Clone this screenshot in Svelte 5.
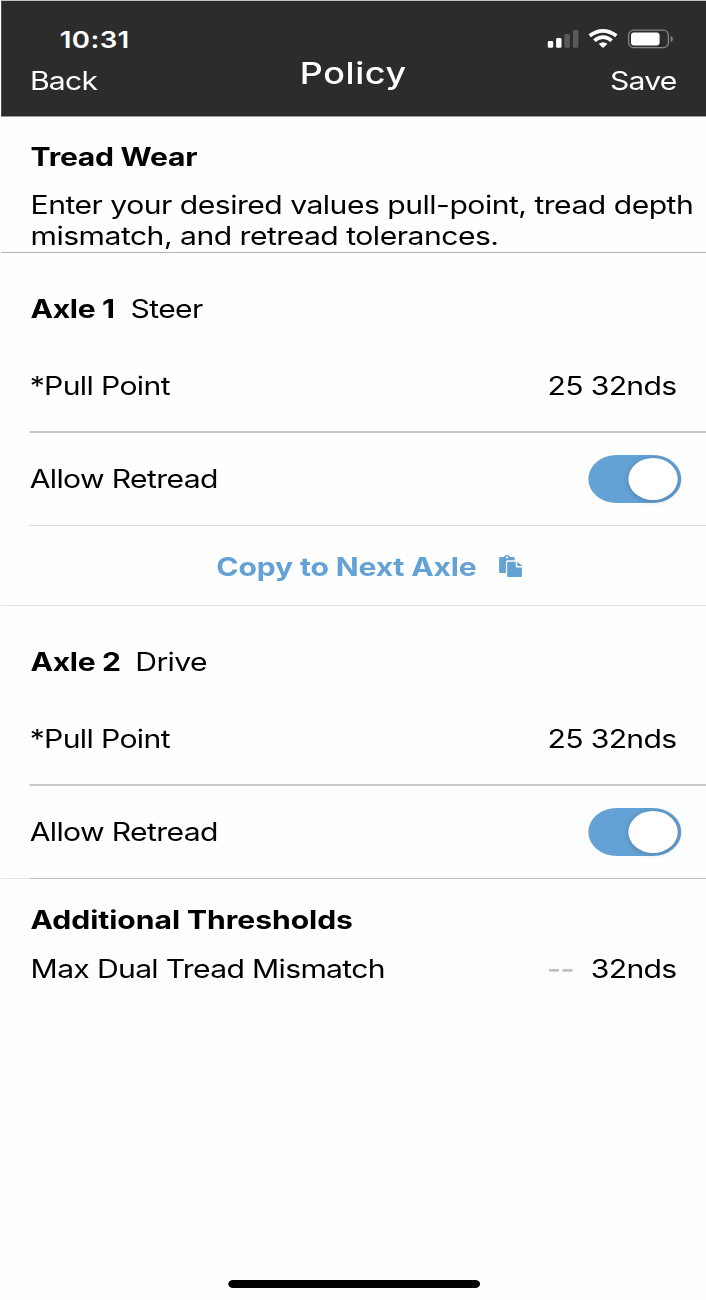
<script>
  const axles = [
    { name: 'Axle 1', kind: 'Steer', pull: 25, retread: true, copy: true },
    { name: 'Axle 2', kind: 'Drive', pull: 25, retread: true, copy: false }
  ];
</script>

<div class="screen">
  <header>
    <div class="status">
      <span class="time">10:31</span>
      <svg class="indicators" width="110" height="24" viewBox="0 0 129.43 24" preserveAspectRatio="none">
        <g fill="#fff">
          <rect x="3" y="14" width="5.4" height="6.8" rx="1.4" />
          <rect x="11.3" y="11" width="5.4" height="9.8" rx="1.4" />
          <g fill="#5a5a5a">
            <rect x="19.6" y="7" width="5.4" height="13.8" rx="1.4" />
            <rect x="28.2" y="3" width="5.4" height="17.8" rx="1.4" />
          </g>
        </g>
        <g fill="none" stroke="#fff" stroke-width="3.7">
          <path d="M44.9 8.8 Q58.2 -1.2 71.6 8.8" />
          <path d="M49.6 13.6 Q58.2 6.5 66.9 13.6" />
        </g>
        <path d="M53.9 16.8 Q58.2 13.5 62.6 16.8 L59.2 20.2 Q58.2 21.1 57.2 20.2 Z" fill="#fff" />
        <rect x="83.8" y="3.2" width="39.8" height="17.4" rx="5" fill="none" stroke="#858585" stroke-width="1.3" />
        <rect x="86.2" y="5.5" width="28.6" height="12.9" rx="3" fill="#fff" />
        <path d="M125.8 8.9 Q128.2 9.7 128.2 11.9 T125.8 14.9 Z" fill="#858585" />
      </svg>
    </div>
    <nav>
      <span class="action">Back</span>
      <h1>Policy</h1>
      <span class="action save">Save</span>
    </nav>
  </header>

  <section class="intro">
    <h2>Tread Wear</h2>
    <p>Enter your desired values pull-point, tread depth<br />mismatch, and retread tolerances.</p>
  </section>

  {#each axles as axle}
    <section class="axle" class:last={!axle.copy}>
      <div class="heading"><b>{axle.name}</b><span>{axle.kind}</span></div>
      <div class="row pull"><span>*Pull Point</span><span class="value">{axle.pull} 32nds</span></div>
      <div class="row allow">
        <span class="allow-label">Allow Retread</span>
        <div class="toggle" class:on={axle.retread}><i></i></div>
      </div>
      {#if axle.copy}
        <div class="copy">
          <span>Copy to Next Axle</span>
          <svg width="20" height="23" viewBox="0 0 23.5 23" preserveAspectRatio="none" fill="#64a2d5">
            <path d="M1.3 2 H5.1 A3 2.5 0 0 1 11 2 H14.6 Q15.8 2 15.8 3.2 V5.2 H9 Q7 5.2 7 7.2 V18 H1.3 Q0.2 18 0.2 16.8 V3.2 Q0.2 2 1.3 2 Z M8.05 1.3 A1.1 1.1 0 1 0 8.05 3.5 A1.1 1.1 0 1 0 8.05 1.3 Z" fill-rule="evenodd" />
            <path d="M9.3 6.7 H16.8 V11.3 Q16.8 12.5 18 12.5 H23 V20.8 Q23 22 21.8 22 H9.3 Q8.2 22 8.2 20.8 V7.9 Q8.2 6.7 9.3 6.7 Z" />
            <path d="M18.3 6.7 L22.7 10.2 Q23 10.5 23 11 H18.3 Z" />
          </svg>
        </div>
      {/if}
    </section>
  {/each}

  <section class="thresholds">
    <h2>Additional Thresholds</h2>
    <div class="limit"><span>Max Dual Tread Mismatch</span><span class="value"><em>--</em>32nds</span></div>
  </section>

  <div class="home"></div>
</div>

<style>
  :global(body) {
    background: #fefefe;
    overflow: hidden;
  }
  .screen {
    box-sizing: border-box;
    display: flex;
    flex-direction: column;
    width: 600px;
    height: 1300px;
    transform: scaleX(1.176667);
    transform-origin: 0 0;
    font: 400 25.6px/31px Inter, sans-serif;
    letter-spacing: -0.54px;
    color: #000;
  }
  header {
    box-sizing: border-box;
    height: 117px;
    margin-left: 0.85px;
    border-top: 1px solid #c4c6c6;
    border-bottom: 1px solid #9a9a9a;
    background: #2c2c2c;
    color: #fff;
  }
  .status {
    display: flex;
    justify-content: space-between;
    padding: 26px 27px 0 50px;
    height: 24px;
  }
  .time {
    font-size: 23.5px;
    font-weight: 600;
    line-height: 26px;
    letter-spacing: 0.3px;
  }
  nav {
    display: grid;
    grid-template-columns: 1fr auto 1fr;
    padding: 0 25px 0 24.6px;
  }
  .action {
    padding-top: 14px;
    letter-spacing: -0.65px;
  }
  .save {
    text-align: right;
  }
  h1 {
    margin: 0;
    padding-top: 6px;
    font-size: 30.5px;
    font-weight: 550;
    letter-spacing: 0.5px;
  }
  h2 {
    margin: 0;
    font-size: 25.6px;
    font-weight: 700;
    line-height: 32px;
    letter-spacing: -0.05px;
  }
  .intro h2 {
    letter-spacing: -0.25px;
  }
  p {
    margin: 16px 0 0;
    white-space: nowrap;
    letter-spacing: -0.435px;
  }
  .intro {
    box-sizing: border-box;
    height: 136px;
    margin-left: 0.85px;
    padding: 24px 0 0 25.15px;
    border-bottom: 1px solid #b2b2b2;
  }
  .heading {
    display: flex;
    gap: 13.5px;
    padding: 25px 0 0 26px;
    line-height: 62px;
  }
  .heading b {
    letter-spacing: -0.3px;
  }
  .last .heading {
    gap: 12.5px;
  }
  .row {
    box-sizing: border-box;
    display: flex;
    align-items: center;
    justify-content: space-between;
    height: 93px;
    margin-left: 25.2px;
    padding-right: 25px;
    border-bottom: 2px solid #c9c9c9;
  }
  .row span {
    padding-bottom: 1px;
  }
  .allow {
    padding-right: 21px;
    border-bottom: 1px solid #d9d9d9;
  }
  .allow span {
    padding-bottom: 2px;
  }
  .last {
    margin-left: 0.85px;
    border-bottom: 1px solid #e4e4e4;
  }
  .last .heading {
    padding-left: 25.15px;
  }
  .last .row {
    margin-left: 24.35px;
  }
  .last .allow {
    margin-bottom: -1px;
    border-bottom-color: #c2c2c2;
  }
  .toggle {
    box-sizing: border-box;
    display: flex;
    width: 78.8px;
    height: 48px;
    padding: 3px;
    border-radius: 24px;
    background: #d8d8d8;
  }
  .toggle.on {
    justify-content: flex-end;
    background: #64a2d5;
  }
  .toggle i {
    width: 42px;
    height: 42px;
    border-radius: 50%;
    background: #fff;
    box-shadow: 0 1px 6px rgba(0, 0, 0, 0.22);
  }
  .copy {
    display: flex;
    align-items: center;
    box-sizing: border-box;
    height: 80px;
    margin-left: 0.85px;
    padding: 1px 0 0 183px;
    gap: 19px;
    border-bottom: 1px solid #e2e2e2;
    color: #64a2d5;
    font-weight: 700;
    letter-spacing: -0.15px;
  }
  .thresholds {
    padding: 25px 25px 0 26px;
  }
  .limit {
    display: flex;
    justify-content: space-between;
    margin-top: 17px;
    letter-spacing: -0.57px;
  }
  em {
    margin-right: 14.5px;
    color: #c0c0c0;
    font-style: normal;
    font-weight: 600;
  }
  .home {
    width: 214px;
    height: 8px;
    margin: auto auto 12px 194px;
    border-radius: 4px;
    background: #000;
  }
</style>
